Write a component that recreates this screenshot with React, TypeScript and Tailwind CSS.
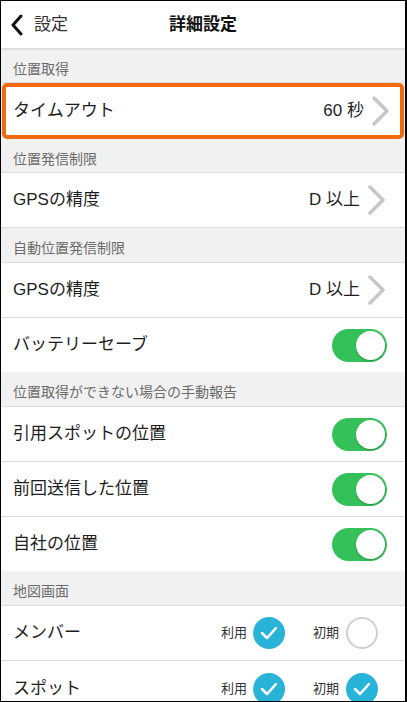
import React from 'react';

const FONT = { fontFamily: '"Liberation Sans", "Noto Sans CJK JP", sans-serif' };

function Chevron() {
  return (
    <svg width="20" height="30" viewBox="0 0 20 30" className="ml-[7px]">
      <path d="M3 2 L16 15 L3 28" fill="none" stroke="#c7c7c7" strokeWidth="3.5" strokeLinecap="round" strokeLinejoin="round" />
    </svg>
  );
}

function Toggle() {
  return (
    <div className="relative w-[55px] h-[33px] rounded-full bg-[#35c15a]">
      <div className="absolute right-[2px] top-[2px] w-[29px] h-[29px] rounded-full bg-white shadow-[0_1px_2px_rgba(0,0,0,0.25)]" />
    </div>
  );
}

function Check({ on }: { on: boolean }) {
  if (!on) {
    return <div className="w-[32px] h-[32px] rounded-full border-2 border-[#d0d0d0] bg-white" />;
  }
  return (
    <div className="w-[32px] h-[32px] rounded-full bg-[#27b4d8] flex items-center justify-center">
      <svg width="18" height="14" viewBox="0 0 18 14">
        <path d="M2 7 L7 12 L16 2" fill="none" stroke="#fff" strokeWidth="2.5" strokeLinecap="round" strokeLinejoin="round" />
      </svg>
    </div>
  );
}

function Section({ title, h = 'h-[35px]' }: { title: string; h?: string }) {
  return (
    <div className={`${h} shrink-0 flex items-center pt-[7px] px-[12px] bg-[#f1f1f1] border-b border-[#dcdcdc] text-[14px] text-[#6b6b6b]`}>
      {title}
    </div>
  );
}

function Row({ label, children, h = 'h-[55px]', last = false }: { label: string; children?: React.ReactNode; h?: string; last?: boolean }) {
  return (
    <div className={`${h} shrink-0 flex items-center justify-between pl-[12px] bg-white ${last ? '' : 'border-b border-[#dcdcdc]'}`}>
      <span className="text-[17px] text-[#1e1e1e]">{label}</span>
      {children}
    </div>
  );
}

function ValueLink({ value }: { value: string }) {
  return (
    <div className="flex items-center pr-[18px]">
      <span className="text-[17px] text-[#1e1e1e]">{value}</span>
      <Chevron />
    </div>
  );
}

function Marks({ use, init }: { use: boolean; init: boolean }) {
  return (
    <div className="flex items-center pr-[27px]">
      <span className="text-[13px] text-[#333] mr-[6px]">利用</span>
      <Check on={use} />
      <span className="text-[13px] text-[#333] ml-[28px] mr-[7px]">初期</span>
      <Check on={init} />
    </div>
  );
}

export default function App() {
  return (
    <div className="w-[407px] h-[702px] overflow-hidden border border-r-2 border-black bg-[#f1f1f1] flex flex-col" style={FONT}>
      <div className="h-[49px] shrink-0 relative flex items-center bg-white border-b-2 border-[#dedede]">
        <div className="flex items-center pl-[9px]">
          <svg width="14" height="22" viewBox="0 0 14 22">
            <path d="M11 2 L3 11 L11 20" fill="none" stroke="#111" strokeWidth="3" strokeLinecap="round" strokeLinejoin="round" />
          </svg>
          <span className="ml-[10px] text-[17px] text-[#333]">設定</span>
        </div>
        <div className="absolute left-0 right-0 text-center text-[17px] font-bold text-[#111] pointer-events-none">詳細設定</div>
      </div>

      <Section title="位置取得" h="h-[33px]" />
      <div className="h-[56px] shrink-0 mx-[1px] flex items-center justify-between pl-[7px] bg-white border-4 border-[#f26a0f] rounded-[5px] relative">
        <span className="text-[17px] text-[#1e1e1e]">タイムアウト</span>
        <div className="flex items-center pr-[9px]">
          <span className="text-[17px] text-[#1e1e1e]">60 秒</span>
          <Chevron />
        </div>
      </div>

      <Section title="位置発信制限" h="h-[34px]" />
      <Row label="GPSの精度">
        <ValueLink value="D 以上" />
      </Row>

      <Section title="自動位置発信制限" />
      <Row label="GPSの精度">
        <ValueLink value="D 以上" />
      </Row>
      <Row label="バッテリーセーブ" h="h-[54px]" last>
        <div className="pr-[18px]"><Toggle /></div>
      </Row>

      <Section title="位置取得ができない場合の手動報告" />
      <Row label="引用スポットの位置">
        <div className="pr-[18px]"><Toggle /></div>
      </Row>
      <Row label="前回送信した位置">
        <div className="pr-[18px]"><Toggle /></div>
      </Row>
      <Row label="自社の位置" h="h-[54px]" last>
        <div className="pr-[18px]"><Toggle /></div>
      </Row>

      <Section title="地図画面" />
      <Row label="メンバー">
        <Marks use={true} init={false} />
      </Row>
      <Row label="スポット" last>
        <Marks use={true} init={true} />
      </Row>
    </div>
  );
}
